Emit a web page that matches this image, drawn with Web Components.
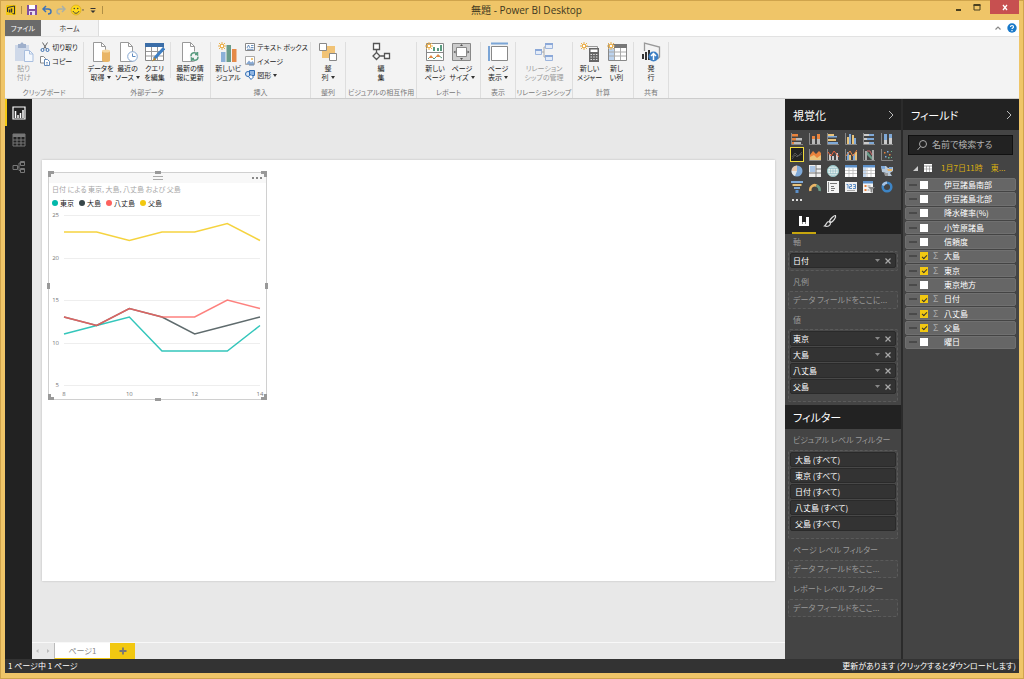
<!DOCTYPE html>
<html lang="ja">
<head>
<meta charset="utf-8">
<title>無題 - Power BI Desktop</title>
<style>
    :root{
        --gold: #efc568;
        --brand-yellow: #f2c811;
        --dark: #222;
        --panel: #444;
        --ribbon: #f3f3f3;
    }
    html, body{
        height: 100%;
        margin: 0;
    }
    body{
        font: 8px/10px "Noto Sans CJK JP", sans-serif;
        font-feature-settings: "palt";
        color: #333;
    }
</style>
</head>
<body>

<template id="ui-icon">
    <style>
        :host{ display: block; flex: none; width: 20px; height: 20px; }
        :host([size="12"]){ width: 12px; height: 12px; }
        :host([size="10"]){ width: 10px; height: 10px; }
        :host([size="14"]){ width: 14px; height: 14px; }
        svg{ display: block; width: 100%; height: 100%; }
    </style>
</template>

<template id="title-bar">
    <style>
        :host{ display: flex; height: 20px; }
        .quick{ display: flex; align-items: center; gap: 4px; }
        .sep{ width: 1px; height: 8px; background: #b08f45; }
        .controls{ display: flex; align-items: flex-start; }
        h1{ flex: 1; margin: 0; text-align: center; font: 10px/21px "Open Sans", "Noto Sans CJK JP", sans-serif; color: #40381f; }
        button{ padding: 0; border: 0; background: none; }
        .controls button{ display: flex; justify-content: center; align-items: center; width: 18px; height: 14px; }
        .controls .close{ width: 29px; background: #c75050; margin-left: 4px; }
    </style>
    <div class="quick">
        <ui-icon name="logo" size="12"></ui-icon>
        <span class="sep"></span>
        <button aria-label="保存"><ui-icon name="save" size="12"></ui-icon></button>
        <button aria-label="元に戻す"><ui-icon name="undo" size="10"></ui-icon></button>
        <button aria-label="やり直し"><ui-icon name="redo" size="10"></ui-icon></button>
        <button aria-label="フィードバック"><ui-icon name="smile" size="14"></ui-icon></button>
        <button aria-label="カスタマイズ"><ui-icon name="customize" size="10"></ui-icon></button>
        <span class="sep"></span>
    </div>
    <h1>無題 - Power BI Desktop</h1>
    <div class="controls">
        <button aria-label="最小化"><ui-icon name="min" size="10"></ui-icon></button>
        <button aria-label="最大化"><ui-icon name="max" size="10"></ui-icon></button>
        <button class="close" aria-label="閉じる"><ui-icon name="close" size="10"></ui-icon></button>
    </div>
</template>

<template id="ribbon-tabs">
    <style>
        :host{ display: flex; align-items: stretch; height: 16px; background: #fff; font-size: 7px; }
        button{ padding: 0; border: 0; font: inherit; color: #333; }
        .file{ width: 36px; background: #6a6a6a; color: #fff; }
        .home{ width: 58px; background: var(--ribbon); border-right: 1px solid #ddd; }
        .end{ display: flex; align-items: center; gap: 4px; margin-left: auto; padding-right: 2px; }
        .end button{ background: none; }
    </style>
    <button class="file">ファイル</button>
    <button class="home">ホーム</button>
    <div class="end">
        <button aria-label="リボンを折りたたむ"><ui-icon name="up" size="10"></ui-icon></button>
        <button aria-label="ヘルプ"><ui-icon name="help" size="10"></ui-icon></button>
    </div>
</template>

<template id="ribbon-group">
    <style>
        :host{
            display: flex;
            flex-direction: column;
            flex: none;
            width: var(--w, 35px);
            border-right: 1px solid #dedede;
        }
        .items{ display: flex; justify-content: center; flex: 1; gap: var(--gap, 0); white-space: nowrap; }
        .label{ text-align: center; white-space: nowrap; color: #777; line-height: 12px; }
    </style>
    <div class="items"><slot></slot></div>
    <div class="label"></div>
</template>

<template id="ribbon-button">
    <style>
        :host{ display: block; }
        button{
            display: flex;
            flex-direction: column;
            align-items: center;
            gap: 2px;
            width: var(--bw, 27px);
            padding: 0;
            border: 0;
            background: none;
            font: inherit;
            line-height: 9px;
            color: #222;
            white-space: nowrap;
        }
        :host([disabled]) button{ color: #999; }
        .menu::after{
            content: "";
            display: inline-block;
            margin-left: 2px;
            vertical-align: 1px;
            border: 2px solid transparent;
            border-top: 3px solid #333;
            border-bottom: 0;
        }
        :host([small]) button{ flex-direction: row; width: auto; height: 14px; }
        :host([small]) .text{ line-height: 14px; }
    </style>
    <button><ui-icon></ui-icon><span class="text"><slot></slot></span></button>
</template>

<template id="main-ribbon">
    <style>
        :host{
            display: flex;
            height: 63px;
            padding-top: 5px;
            background: var(--ribbon);
            border-top: 1px solid #e2e2e2;
            border-bottom: 1px solid #ccc;
            overflow: hidden;
            font-size: 7px;
        }
        .stack{ display: flex; flex-direction: column; margin-top: -2px; }
        .rule{ width: 1px; margin: 0 2px; height: 36px; background: #e0e0e0; }
    </style>
    <ribbon-group label="クリップボード" style="--w:79px; --gap:3px">
        <ribbon-button icon="paste" disabled>貼り<br>付け</ribbon-button>
        <div class="stack">
            <ribbon-button icon="cut" small>切り取り</ribbon-button>
            <ribbon-button icon="copy" small>コピー</ribbon-button>
        </div>
    </ribbon-group>
    <ribbon-group label="外部データ" style="--w:127px">
        <ribbon-button icon="data">データを<br>取得</ribbon-button>
        <ribbon-button icon="recent">最近の<br>ソース</ribbon-button>
        <ribbon-button icon="query">クエリ<br>を編集</ribbon-button>
        <span class="rule"></span>
        <ribbon-button icon="refresh" style="--bw:34px">最新の情<br>報に更新</ribbon-button>
    </ribbon-group>
    <ribbon-group label="挿入" style="--w:100px; --gap:2px">
        <ribbon-button icon="visual" style="--bw:30px">新しいビ<br>ジュアル</ribbon-button>
        <div class="stack">
            <ribbon-button icon="textbox" small>テキスト ボックス</ribbon-button>
            <ribbon-button icon="image" small>イメージ</ribbon-button>
            <ribbon-button icon="shapes" small menu>図形</ribbon-button>
        </div>
    </ribbon-group>
    <ribbon-group label="整列"><ribbon-button icon="align" menu>整<br>列</ribbon-button></ribbon-group>
    <ribbon-group label="ビジュアルの相互作用" style="--w:71px"><ribbon-button icon="interact">編<br>集</ribbon-button></ribbon-group>
    <ribbon-group label="レポート" style="--w:64px">
        <ribbon-button icon="newpage">新しい<br>ページ</ribbon-button>
        <ribbon-button icon="pagesize" menu>ページ<br>サイズ</ribbon-button>
    </ribbon-group>
    <ribbon-group label="表示"><ribbon-button icon="pageview" menu>ページ<br>表示</ribbon-button></ribbon-group>
    <ribbon-group label="リレーションシップ" style="--w:57px"><ribbon-button icon="relation" disabled style="--bw:45px">リレーション<br>シップの管理</ribbon-button></ribbon-group>
    <ribbon-group label="計算" style="--w:61px">
        <ribbon-button icon="measure">新しい<br>メジャー</ribbon-button>
        <ribbon-button icon="column">新し<br>い列</ribbon-button>
    </ribbon-group>
    <ribbon-group label="共有"><ribbon-button icon="publish">発<br>行</ribbon-button></ribbon-group>
</template>

<template id="nav-rail">
    <style>
        :host{ display: flex; flex-direction: column; flex: none; width: 27px; background: var(--dark); }
        button{
            display: flex;
            align-items: center;
            justify-content: center;
            height: 27px;
            padding: 0 2px 0 0;
            border: 0;
            border-left: 2px solid transparent;
            background: none;
            color: #777;
        }
        button[aria-pressed="true"]{ border-color: var(--brand-yellow); color: #fff; }
    </style>
    <button aria-label="レポート" aria-pressed="true"><ui-icon name="report" size="14"></ui-icon></button>
    <button aria-label="データ" aria-pressed="false"><ui-icon name="table" size="14"></ui-icon></button>
    <button aria-label="リレーションシップ" aria-pressed="false"><ui-icon name="model" size="14"></ui-icon></button>
</template>

<template id="line-chart">
    <style>
        :host{
            display: block;
            position: relative;
            border: 1px solid #d0d0d0;
            background: #fff;
        }
        .grip{ display: flex; justify-content: center; height: 10px; padding-top: 3px; background: #f8f8f8; }
        .grip i{ width: 10px; height: 4px; border: 1px solid #aaa; border-width: 1px 0; }
        .more{ position: absolute; right: 4px; top: 3px; padding: 0; border: 0; background: none; line-height: 4px; }
        h2{ margin: 0; padding: 0 3px; font-size: 7px; line-height: 12px; font-weight: 400; color: #a6a6a6; white-space: nowrap; }
        ul{ display: flex; gap: 5px; margin: 0; padding: 2px 3px 0; list-style: none; font-size: 7px; line-height: 12px; color: #222; }
        li{ display: flex; align-items: center; gap: 2px; }
        li::before{ content: ""; width: 6px; height: 6px; border-radius: 50%; background: var(--c); }
        svg{ display: block; width: 100%; overflow: visible; }
        text{ font: 6px "Open Sans", sans-serif; fill: #777; }
        /* resize handles sit over the frame */
        .h{ position: absolute; width: 6px; height: 6px; border: 0 solid #999; }
        .tl{ left: -1px; top: -2px; border-width: 3px 0 0 3px; }
        .tr{ right: -1px; top: -2px; border-width: 3px 3px 0 0; }
        .bl{ left: -1px; bottom: -1px; border-width: 0 0 3px 3px; }
        .br{ right: -1px; bottom: -1px; border-width: 0 3px 3px 0; }
        .t, .b{ left: calc(50% - 3px); height: 3px; background: #999; }
        .t{ top: -2px; }
        .b{ bottom: -2px; }
        .l, .r{ top: calc(50% - 3px); width: 3px; background: #999; }
        .l{ left: -2px; }
        .r{ right: -2px; }
    </style>
    <div class="grip"><i></i></div>
    <button class="more" aria-label="その他"><svg viewBox="0 0 10 4" style="width:10px"><path d="M0 1h2v2H0zM4 1h2v2H4zM8 1h2v2H8z" fill="#888"/></svg></button>
    <h2></h2>
    <ul></ul>
    <svg class="plot" viewBox="0 0 217 190"></svg>
    <i class="h tl"></i><i class="h t"></i><i class="h tr"></i><i class="h l"></i>
    <i class="h r"></i><i class="h bl"></i><i class="h b"></i><i class="h br"></i>
</template>

<template id="report-canvas">
    <style>
        :host{ display: flex; flex-direction: column; flex: 1; min-width: 0; background: #e8e8e8; }
        .stage{ display: flex; flex: 1; padding: 61px 10px; border-bottom: 1px solid #f8f8f8; }
        .page{ position: relative; flex: 1; background: #fff; box-shadow: 0 0 2px #bbb; }
        line-chart{ position: absolute; left: 6px; top: 12px; width: 219px; }
        .tabs{ display: flex; height: 16px; }
        button{ padding: 0; border: 0; background: none; font: inherit; color: #888; }
        .arrow{ width: 11px; color: #bbb; }
        .page-tab{ width: 56px; background: #fff; border-left: 1px solid #bbb; border-bottom: 1px solid var(--brand-yellow); }
        .add{ display: flex; align-items: center; justify-content: center; width: 25px; background: var(--brand-yellow); }
    </style>
    <div class="stage"><div class="page"><line-chart heading="日付 による 東京, 大島, 八丈島 および 父島"></line-chart></div></div>
    <div class="tabs">
        <button class="arrow" aria-label="前へ"><ui-icon name="prev" size="10"></ui-icon></button>
        <button class="arrow" aria-label="次へ"><ui-icon name="next" size="10"></ui-icon></button>
        <button class="page-tab">ページ1</button>
        <button class="add" aria-label="新しいページ"><ui-icon name="plus" size="10"></ui-icon></button>
    </div>
</template>

<template id="pane-header">
    <style>
        :host{ display: flex; align-items: center; justify-content: space-between; height: 31px; padding: 0 5px 0 8px; background: var(--dark); }
        :host([compact]){ height: 24px; }
        h2{ margin: 0; font-size: 11px; line-height: 16px; font-weight: 400; color: #fff; }
        button{ padding: 0; border: 0; background: none; }
        :host([compact]) button{ display: none; }
    </style>
    <h2><slot></slot></h2>
    <button aria-label="折りたたむ"><ui-icon name="chevron" size="10"></ui-icon></button>
</template>

<template id="field-well">
    <style>
        :host{ display: block; }
        h3{ margin: 0; padding: 0 8px; font-size: 8px; line-height: 12px; font-weight: 400; color: #999; white-space: nowrap; }
        .box{ margin: var(--head, 3px) 3px 0; padding: 1px; border: 1px dashed #5a5a5a; border-radius: 2px; background: #484848; }
        .box.filled{ padding-bottom: var(--tail, 1px); }
        .empty{ padding: 0 3px; line-height: 14px; color: #999; white-space: nowrap; }
    </style>
    <h3></h3>
    <div class="box"><slot><div class="empty"></div></slot></div>
</template>

<template id="well-item">
    <style>
        :host{
            display: flex;
            align-items: center;
            gap: 5px;
            height: 15px;
            margin-bottom: 1px;
            padding: 0 4px 0 2px;
            border: 1px solid #2a2a2a;
            border-radius: 2px;
            background: #333;
            color: #fff;
        }
        :host([filter]){ padding-left: 4px; }
        :host([filter]) button{ display: none; }
        span{ flex: 1; }
        button{ padding: 0; border: 0; background: none; }
        svg{ display: block; }
    </style>
    <span><slot></slot></span>
    <button aria-label="メニュー"><svg width="5" height="3"><path d="M0 0h5L2.500 3z" fill="#888"/></svg></button>
    <button aria-label="削除"><svg width="6" height="6"><path d="M.5 .5l5 5M5.500 .5l-5 5" stroke="#aaa" stroke-width="1.200"/></svg></button>
</template>

<template id="visual-pane">
    <style>
        :host{ display: flex; flex-direction: column; flex: none; width: 118px; border-right: 2px solid #2b2b2b; background: var(--panel); }
        .gallery{ display: grid; grid-template-columns: repeat(6, 18px); grid-auto-rows: 15px; row-gap: 1px; padding: 1px 0 0 3px; }
        .gallery button{ display: flex; align-items: center; justify-content: center; padding: 0; border: 0; background: none; }
        .gallery button[aria-pressed="true"]{ margin: 0 2px; outline: 1px solid #f2dc3c; outline-offset: -1px; background: #222; }
        .dots{ align-self: flex-start; padding: 0 7px; margin: 5px 0 5px; border: 0; background: none; }
        .dots svg{ display: block; }
        .tabs{ display: flex; height: 24px; padding-left: 7px; background: var(--dark); }
        .tabs button{ display: flex; align-items: center; justify-content: center; width: 24px; padding: 0; border: 0; border-bottom: 2px solid transparent; background: none; margin-right: 2px; }
        .tabs button:first-child{ border-color: #c7a60e; }
        .wells{ padding: 2px 0 3px; display: flex; flex-direction: column; gap: 5px; }
        .wells.filters{ --head: 4px; padding-top: 5px; }
    </style>
    <pane-header>視覚化</pane-header>
    <div class="gallery"></div>
    <button class="dots" aria-label="その他"><svg width="10" height="6"><path d="M0 0h2v2H0zM4 0h2v2H4zM8 0h2v2H8z" fill="#ddd"/></svg></button>
    <div class="tabs">
        <button aria-label="フィールド"><ui-icon name="bars" size="12"></ui-icon></button>
        <button aria-label="書式"><ui-icon name="brush" size="14"></ui-icon></button>
    </div>
    <div class="wells">
        <field-well label="軸"><well-item>日付</well-item></field-well>
        <field-well label="凡例" empty="データ フィールドをここに..."></field-well>
        <field-well label="値" style="--tail:6px">
            <well-item>東京</well-item>
            <well-item>大島</well-item>
            <well-item>八丈島</well-item>
            <well-item>父島</well-item>
        </field-well>
    </div>
    <pane-header compact>フィルター</pane-header>
    <div class="wells filters">
        <field-well label="ビジュアル レベル フィルター" style="--tail:6px">
            <well-item filter>大島 (すべて)</well-item>
            <well-item filter>東京 (すべて)</well-item>
            <well-item filter>日付 (すべて)</well-item>
            <well-item filter>八丈島 (すべて)</well-item>
            <well-item filter>父島 (すべて)</well-item>
        </field-well>
        <field-well label="ページ レベル フィルター" empty="データ フィールドをここ..."></field-well>
        <field-well label="レポート レベル フィルター" empty="データ フィールドをここ..."></field-well>
    </div>
</template>

<template id="field-row">
    <style>
        :host{ display: block; background: #666; border: 1px solid #707070; border-radius: 2px; color: #fff; }
        label{ display: flex; align-items: center; height: 100%; padding-left: 3px; }
        .drag{ width: 8px; height: 2px; background: #4a4a4a; }
        input{ appearance: none; display: flex; align-items: center; justify-content: center; width: 8px; height: 8px; margin: 0 0 0 3px; background: #fff; }
        input:checked{ background: var(--brand-yellow); }
        input:checked::before{ content: ""; width: 3px; height: 5px; border: solid #333; border-width: 0 1px 1px 0; transform: rotate(45deg); }
        .sigma{ width: 16px; padding-left: 5px; font-size: 9px; color: #aaa; }
    </style>
    <label><i class="drag"></i><input type="checkbox"><span class="sigma"></span><span><slot></slot></span></label>
</template>

<template id="fields-pane">
    <style>
        :host{ display: flex; flex-direction: column; flex: none; width: 116px; background: var(--panel); }
        .search{ display: flex; align-items: center; gap: 4px; height: 20px; margin: 5px 6px 3px 5px; padding: 0 7px; background: var(--dark); border: 1px solid #111; }
        input{ flex: 1; min-width: 0; padding: 0; border: 0; background: none; font: inherit; font-size: 9px; color: #ddd; }
        input::placeholder{ color: #b0b0b0; opacity: 1; }
        .table{ display: flex; align-items: center; gap: 5px; height: 20px; padding: 0 8px 0 10px; border: 0; background: none; font: inherit; color: #d8ae10; }
        .table span{ margin-left: 3px; white-space: pre; }
        .list{ display: grid; grid-auto-rows: 1fr; row-gap: 1px; min-height: 171px; padding: 0 3px 0 2px; }
    </style>
    <pane-header>フィールド</pane-header>
    <label class="search"><ui-icon name="search" size="12"></ui-icon><input type="text" placeholder="名前で検索する" aria-label="名前で検索する"></label>
    <button class="table"><svg width="5" height="5"><path d="M5 0v5H0z" fill="#ccc"/></svg><ui-icon name="grid" size="10"></ui-icon><span>1月7日11時　東...</span></button>
    <div class="list">
        <field-row>伊豆諸島南部</field-row>
        <field-row>伊豆諸島北部</field-row>
        <field-row>降水確率(%)</field-row>
        <field-row>小笠原諸島</field-row>
        <field-row>信頼度</field-row>
        <field-row checked>大島</field-row>
        <field-row checked>東京</field-row>
        <field-row>東京地方</field-row>
        <field-row checked>日付</field-row>
        <field-row checked>八丈島</field-row>
        <field-row checked>父島</field-row>
        <field-row>曜日</field-row>
    </div>
</template>

<template id="status-bar">
    <style>
        :host{ display: flex; justify-content: space-between; padding: 0 3px; background: #333; color: #fff; line-height: 14px; }
        a{ color: inherit; text-decoration: none; }
    </style>
    <span>1 ページ中 1 ページ</span>
    <a href="#">更新があります (クリックするとダウンロードします)</a>
</template>

<template id="desktop-app">
    <style>
        :host{
            display: flex;
            flex-direction: column;
            min-height: 100vh;
            padding: 0 5px 6px;
            background: var(--gold);
            box-shadow: inset 0 0 0 1px #cfa44c;
        }
        .work{ display: flex; flex: 1; }
    </style>
    <title-bar></title-bar>
    <ribbon-tabs></ribbon-tabs>
    <main-ribbon></main-ribbon>
    <div class="work">
        <nav-rail></nav-rail>
        <report-canvas></report-canvas>
        <visual-pane></visual-pane>
        <fields-pane></fields-pane>
    </div>
    <status-bar></status-bar>
</template>

<desktop-app></desktop-app>

<script>
    (function desktopApp(customElements){
        'use strict';

        const SUN = '<path d="M4 0v8M0 4h8M1 1l6 6M7 1l-6 6" stroke="#ecb04b"/><circle cx="4" cy="4" r="1.700" fill="#fff" stroke="#ecb04b"/>';
        const SHEET = '<path d="M2.500 .5h8l4 4v15h-12z" fill="#fff" stroke="#999"/><path d="M10.500 .5v4h4" fill="none" stroke="#999"/>';
        const AXES = '<path d="M.5 0v11.500H12" fill="none" stroke="#888"/>';

        // name: [viewBox size, markup]
        const ICONS = {
            logo: [12, '<rect x="1" y="1" width="10" height="10" rx="1" fill="#f2c811"/><path d="M2.500 3.500L9.500 2v8l-2-.5M2.500 3.500V8" fill="none" stroke="#333"/><path d="M4.500 5.500v3M6.500 4.500v4" stroke="#333" stroke-width="1.500"/>'],
            save: [12, '<path d="M1 1h10v10H1z" fill="#8150a0"/><path d="M3 1h6v4H3z" fill="#fff"/><path d="M3 7h6v4H3z" fill="#e8dcf0"/><path d="M4 8h2v3H4z" fill="#8150a0"/>'],
            undo: [10, '<path d="M4 1L1 4l3 3M1 4h5c4 0 4 5 0 5" fill="none" stroke="#3d73b9" stroke-width="1.500"/>'],
            redo: [10, '<path d="M6 1l3 3-3 3M9 4H4C0 4 0 9 4 9" fill="none" stroke="#a8b0a8" stroke-width="1.500"/>'],
            smile: [14, '<circle cx="6" cy="7" r="5" fill="#ffd91a" stroke="#c99b10" stroke-width=".5"/><circle cx="4.300" cy="5.500" r=".8" fill="#444"/><circle cx="7.700" cy="5.500" r=".8" fill="#444"/><path d="M3 8c1 3 5 3 6 0" fill="none" stroke="#444"/><path d="M12 6.500h2l-1 1.500z" fill="#444"/>'],
            customize: [10, '<path d="M2.500 3.500h5" stroke="#333"/><path d="M2.500 5.500h5L5 8z" fill="#333"/>'],
            min: [10, '<path d="M2 8h5" stroke="#4a4020" stroke-width="2"/>'],
            max: [10, '<path d="M2 3h6v5H2z" fill="none" stroke="#4a4020"/><path d="M1.500 3h7" stroke="#4a4020" stroke-width="2"/>'],
            close: [10, '<path d="M3 3l4 5M7 3L3 8" stroke="#fff" stroke-width="1.300"/>'],
            up: [10, '<path d="M2.500 6.500L5 4l2.500 2.500" fill="none" stroke="#888" stroke-width="1.200"/>'],
            help: [10, '<circle cx="5" cy="5" r="4.700" fill="#1979ca"/><path d="M3.500 4c0-2 3-2 3 0 0 1-1.500 1-1.500 2M5 7v1.200" fill="none" stroke="#fff" stroke-width="1.200"/>'],
            paste: [20, '<path d="M1 3h14v16H1z" fill="#cfd9e9"/><path d="M4 2h2.500c0-2 3-2 3 0H12v4H4z" fill="#9fb0cc"/><path d="M10.500 8.500h5l3.500 3.500v7.500h-8.500z" fill="#f4f8fd" stroke="#a9bfdf"/><path d="M15.500 8.500V12H19" fill="none" stroke="#a9bfdf"/>'],
            cut: [10, '<path d="M2.500 .5l4 6.500M7.500 .5l-4 6.500" stroke="#666"/><circle cx="2.500" cy="8" r="1.500" fill="none" stroke="#3d6fb0"/><circle cx="7.500" cy="8" r="1.500" fill="none" stroke="#3d6fb0"/>'],
            copy: [10, '<path d="M.5 .5h3l2 2V7h-5z" fill="#fff" stroke="#888"/><path d="M4.500 3.500h3l2 2v4h-5z" fill="#fff" stroke="#6288b8"/><path d="M6 6.500h2M6 8h2" stroke="#6288b8" stroke-width=".7"/>'],
            data: [20, SHEET + '<path d="M11 9v9.500c0 2 8 2 8 0V9z" fill="#e9b566"/><ellipse cx="15" cy="9" rx="4" ry="1.500" fill="#f6d79f"/>'],
            recent: [20, SHEET + '<circle cx="14.500" cy="14.500" r="4.800" fill="#fff" stroke="#86a8d2"/><path d="M14.500 11.500v3h3" fill="none" stroke="#5d8abf"/>'],
            query: [20, '<path d="M.5 1.500h18v17H.5z" fill="#fff" stroke="#888"/><path d="M0 1h19v4H0z" fill="#3b6ea8"/><path d="M1 9.500h17M1 14h17M6.500 5v13M12.500 5v13" stroke="#999"/><path d="M19 6L9 17" stroke="#3d7fc4" stroke-width="3"/><path d="M9.500 15L7 19.500l4-2z" fill="#b8862f"/>'],
            refresh: [20, SHEET + '<circle cx="14.500" cy="14.500" r="5" fill="#f3f3f3"/><path d="M11 14c0-4 5-4 6.500-1.500V10M18 15c0 4-5 4-6.500 1.500V19M17.500 12.500H15M11.500 16.500H14" fill="none" stroke="#5a9c80" stroke-width="1.500"/>'],
            visual: [20, '<path d="M3 10h4.500v10H3z" fill="#8bb0d8"/><path d="M8.500 3H13v17H8.500z" fill="#6a9c89"/><path d="M14 7h4.500v13H14z" fill="#e58a48"/>' + SUN],
            textbox: [10, '<path d="M.5 1.500h9v7h-9z" fill="#fff" stroke="#888"/><path d="M2 6l1.500-3L5 6M6 3.500h2.500M6 5.500h2.500M2 7.300h6.500" fill="none" stroke="#4a78b0" stroke-width=".8"/>'],
            image: [10, '<path d="M.5 .5h9v8h-9z" fill="#fff" stroke="#aaa"/><path d="M1 8l3-3.500 2 2 1.500-1.500L9 7v1z" fill="#86a8d2"/><circle cx="7" cy="3" r="1" fill="#ecb04b"/><path d="M4 9h5" stroke="#6288b8"/>'],
            shapes: [10, '<circle cx="3" cy="4" r="2.500" fill="#dce9f8" stroke="#2f6db5"/><path d="M4.500 .5h5v5h-5z" fill="#8db4e2" stroke="#2f6db5"/><path d="M3.500 6.500l2.500-2 2.500 2.500L6 9.500z" fill="#fff" stroke="#2f6db5"/>'],
            align: [20, '<path d="M4 4h13v12H4z" fill="#f1c376"/><path d="M1.500 1.500h7v7h-7zM11.500 11.500h7v7h-7z" fill="#fff" stroke="#888"/>'],
            interact: [20, '<path d="M2.500 1.500h6v6h-6zM13.500 11.500h5v5h-5z" fill="#fff" stroke="#555" stroke-width="1.300"/><path d="M5.500 7.500v3M9.500 14h4M5.500 10.500L9 14l-3.500 3.500L2 14z" fill="none" stroke="#555" stroke-width="1.300"/>'],
            newpage: [20, '<path d="M1.500 1.500h17v17h-17z" fill="#fff" stroke="#888"/><path d="M8 9V5h2v4zM12 9V6h2v3zM15 9V3h2v6z" fill="#5a9c80"/><path d="M2 10.500h16" stroke="#888"/><path d="M3 17l3-3 3 3 4-4 4 3" fill="none" stroke="#5a9c80"/><path d="M6 13l2.500 3h-5zM13 12l2.500 3h-5z" fill="#e58a48"/>' + SUN],
            pagesize: [20, '<path d="M.5 1.500h18v17H.5z" fill="#ccc" stroke="#888"/><path d="M4.500 5.500h10v9h-10z" fill="#fff" stroke="#888"/><path d="M8 4l1.500-2L11 4zM8 16l1.500 2 1.500-2zM3.500 8.500l-2 1.500 2 1.500zM15.500 8.500l2 1.500-2 1.500z" fill="#555"/>'],
            pageview: [20, '<path d="M3.500 4.500h16v14h-16z" fill="#fff" stroke="#888"/><path d="M3 1.500h17M1 4v15" stroke="#7ba5d6" stroke-width="2"/>'],
            relation: [20, '<path d="M4 10h6M10 5v10h2M10 5h2" fill="none" stroke="#aaa"/><path d="M1.500 7.500h6v5h-6zM11.500 1.500h7v5h-7zM11.500 13.500h7v5h-7z" fill="#e4ecf8" stroke="#9db5dd"/><path d="M1 8h7M11 2h8M11 14h8" stroke="#8ba8d8" stroke-width="2"/>'],
            measure: [20, '<path d="M5.500 4.500h12v6" fill="none" stroke="#999"/><path d="M9 6h10v14H9z" fill="#666"/><path d="M10.500 7.500h7V10h-7z" fill="#fff"/><path d="M10.500 12.500h7M10.500 15h7M10.500 17.500h7" stroke="#ddd" stroke-dasharray="1.500 1.200"/>' + SUN],
            column: [20, '<path d="M1.500 2.500h18v16h-18z" fill="#fff" stroke="#888"/><path d="M7 2h13v4H7z" fill="#777"/><path d="M2 6h5v12H2z" fill="#bcd3ee"/><path d="M2 10h17M2 14h17M7.500 6v12M13.500 6v12" stroke="#aaa"/>' + SUN],
            publish: [20, '<path d="M3.500 9V1l15 4v10l-2 2" fill="none" stroke="#999" stroke-width="1.300"/><path d="M2 12v5M5 10v8M8 8v10" stroke="#333" stroke-width="2"/><circle cx="12.500" cy="14.500" r="5" fill="#3d7fc4"/><path d="M12.500 18v-6M10 14l2.500-2.500L15 14" fill="none" stroke="#fff" stroke-width="1.500"/>'],
            report: [14, '<path d="M1 1h12v12H1z" fill="none" stroke="currentColor" stroke-width="1.200"/><path d="M3.500 5v7M6 9v3M8.500 7v5M11 4v8" stroke="currentColor" stroke-width="1.500"/>'],
            table: [14, '<path d="M1 1h12v3H1z" fill="currentColor"/><path d="M1 1h12v12H1zM1 7h12M1 10h12M5 4v9M9 4v9" fill="none" stroke="currentColor"/>'],
            model: [14, '<path d="M1 5.500h4.500v4H1zM8.500 1.500h4v4h-4zM8.500 8.500h4v4h-4zM5.500 7h1.500M8.500 3H7v7.500h1.500M8.500 2.500h4M8.500 9.500h4" fill="none" stroke="currentColor"/>'],
            prev: [10, '<path d="M6.500 3v4L4 5z" fill="#bbb"/>'],
            next: [10, '<path d="M4 3v4l2.500-2z" fill="#bbb"/>'],
            plus: [10, '<path d="M5 1.500v7M1.500 5h7" stroke="#777" stroke-width="1.800"/>'],
            chevron: [10, '<path d="M3 1l4 4-4 4" fill="none" stroke="#bbb"/>'],
            search: [12, '<circle cx="7" cy="5" r="3.500" fill="none" stroke="#aaa"/><path d="M4.500 7.500L1.500 11" stroke="#aaa"/>'],
            grid: [10, '<path d="M1 1h8v8H1z" fill="#fff"/><path d="M1 3h8" stroke="#999"/><path d="M3.500 3v6M6.500 3v6M1 6h8" stroke="#888" stroke-width=".6"/>'],
            bars: [12, '<path d="M1 1h3v10H1zM4.500 7h3v4h-3zM8 2h3v9H8z" fill="#fff"/><path d="M4 9h4v2H4z" fill="#fff"/>'],
            brush: [14, '<path d="M12.500 1.500c-2 0-5 3.500-6 5.500l1.500 1.500c2-1 5.500-5 4.500-7zM6 7.500c-3 0-2 3-4.500 4.500 3 1 6 0 6-3z" fill="none" stroke="#ddd" stroke-width="1.200"/>'],
            hstack: [12, AXES + '<path d="M1 1h6v2.500H1zM1 5h4v2.500H1zM1 9h2v2H1z" fill="#e8823c"/><path d="M5 5h6v2.500H5zM3 9h7v2H3z" fill="#bbb"/>'],
            vstack: [12, AXES + '<path d="M3 3h3v3H3zM8 1h3v5H8z" fill="#e8823c"/><path d="M3 6h3v5H3zM8 6h3v5H8z" fill="#bbb"/>'],
            hbar: [12, AXES + '<path d="M1 1h6v2H1zM1 6h8v2H1z" fill="#e9c37a"/><path d="M1 3h9v1.500H1zM1 9h10v2H1z" fill="#7fa9d8"/>'],
            vbar: [12, AXES + '<path d="M2 4h2v7H2zM7 2h2v9H7z" fill="#e9c37a"/><path d="M4 1h2v10H4zM9 5h2v6H9z" fill="#7fa9d8"/>'],
            hfull: [12, AXES + '<path d="M1 1h5v2H1zM1 5h3v2H1zM1 9h5v2H1z" fill="#ccc"/><path d="M6 1h5v2H6zM4 5h7v2H4zM6 9h5v2H6z" fill="#7fa9d8"/>'],
            vfull: [12, AXES + '<path d="M3 1h3v6H3zM8 1h3v4H8z" fill="#7fa9d8"/><path d="M3 7h3v4H3zM8 5h3v6H8z" fill="#ccc"/>'],
            line: [12, '<path d="M1 10l3-4 2 2 5-5M1 8l3-4 3 3 4-2" fill="none" stroke="#555"/>'],
            area: [12, AXES + '<path d="M1 11V6l3-4 3 3 3-3 2 2v7z" fill="#e8823c"/><path d="M1 11V8l4-2 3 3 4-3v5z" fill="#e9c37a"/>'],
            combo: [12, AXES + '<path d="M2 5h2v6H2zM5 7h2v4H5zM9 4h2v7H9z" fill="#ccc"/><path d="M1 3l3 4 3-5 5 6" fill="none" stroke="#e8623c"/>'],
            combo2: [12, AXES + '<path d="M2 3h2v8H2zM8 5h2v6H8z" fill="#7fa9d8"/><path d="M4 6h2v5H4zM10 3h2v8h-2z" fill="#e9c37a"/><path d="M1 7l4-5 3 5 4-6" fill="none" stroke="#e8823c"/>'],
            ribbon: [12, AXES + '<path d="M2 2h2v9H2zM9 1h2v10H9z" fill="#aaa"/><path d="M4 2l5 6v3L4 6z" fill="#6a9c89"/><path d="M4 2h3l2 4" fill="none" stroke="#c96a6a"/>'],
            scatter: [12, AXES + '<path d="M3 3h1.500v1.500H3zM8 5h1.500v1.500H8z" fill="#e8823c"/><path d="M6 2h1.500v1.500H6zM4 7h1.500v1.500H4z" fill="#7fa9d8"/><path d="M10 2h1v1h-1zM7 8h1.500v1.500H7zM10 8h1v1h-1z" fill="#6ab08e"/>'],
            pie: [12, '<circle cx="6" cy="6" r="5.500" fill="#7fa9d8"/><path d="M6 6V.5A5.500 5.500 0 0 0 .5 6z" fill="#e8c9b0"/><path d="M6 6L.5 6A5.500 5.500 0 0 0 4 11z" fill="#e8e8e8"/>'],
            tree: [12, '<path d="M0 0h12v12H0z" fill="#eee"/><path d="M1 1h5v6H1z" fill="#a9c4e4"/><path d="M7 0v12M0 8h12M7 4h5" stroke="#777"/>'],
            globe: [12, '<circle cx="6" cy="6" r="5.500" fill="#e8f2ef" stroke="#9cc"/><path d="M.5 6h11M6 .5v11M1.500 3.500h9M1.500 8.500h9" stroke="#8ab5c0" stroke-width=".6"/><ellipse cx="6" cy="6" rx="2.500" ry="5.500" fill="none" stroke="#8ab5c0" stroke-width=".6"/>'],
            tbl: [12, '<path d="M0 0h12v12H0z" fill="#fff"/><path d="M0 0h12v2.500H0z" fill="#5b8fc9"/><path d="M0 5.500h12M0 8.500h12M4 3v9M8 3v9" stroke="#bbb" stroke-width=".8"/>'],
            matrix: [12, '<path d="M0 0h12v12H0z" fill="#fff"/><path d="M0 0h12v2.500H0z" fill="#5b8fc9"/><path d="M0 3h3v9H0z" fill="#c4d8ee"/><path d="M0 5.500h12M0 8.500h12M4 3v9M8 3v9" stroke="#bbb" stroke-width=".8"/>'],
            map: [12, '<path d="M0 1h5l2 2 5-1v4l-3 2 2 3H7L5 8 1 7z" fill="#b8c8d8"/><path d="M0 1h4v3H1zM8 2h3v2H8z" fill="#7fa9d8"/><path d="M6 4h5v2H7z" fill="#e9b566"/><path d="M3 8h4v3H4z" fill="#999"/>'],
            funnel: [12, '<path d="M0 0h12v2H0z" fill="#7fa9d8"/><path d="M1.500 3h9v2h-9z" fill="#e9c37a"/><path d="M3 6h6v2H3z" fill="#7fa9d8"/><path d="M4.500 9h3v3h-3z" fill="#5b8fc9"/>'],
            gauge: [12, '<path d="M1.500 10a4.500 4.500 0 0 1 6-5.500" fill="none" stroke="#e9b566" stroke-width="2.500"/><path d="M7.500 4.500a5 5 0 0 1 3 5.500" fill="none" stroke="#6a9c89" stroke-width="2.500"/>'],
            card: [12, '<path d="M0 0h12v12H0z" fill="#f4f4f4"/><path d="M3 2.500h7M4 5.500h3M4 7.500h4M4 9.500h3" stroke="#777"/><path d="M1.500 1v10" stroke="#888"/>'],
            num: [12, '<path d="M0 1h12v10H0z" fill="#eee"/><path d="M1.500 3.500h1.500v4M4.500 3.500h2v2h-2v2h2.500M8 3.500h2.500v4H8M8.500 5.500h2" fill="none" stroke="#4a80c0" stroke-width=".9"/><path d="M2 9.500h8" stroke="#aaa"/>'],
            slicer: [12, '<path d="M0 0h10v12H0z" fill="#f4f4f4"/><path d="M0 0h10v2.500H0z" fill="#5b8fc9"/><path d="M1.500 4h2v2h-2zM1.500 8h2v2h-2z" fill="#e8823c"/><path d="M4.500 5h3M4.500 9h2" stroke="#999"/><path d="M5 6h7L9.500 8.500V12l-2-1V8.500z" fill="#888"/>'],
            donut: [12, '<circle cx="6" cy="6" r="4.300" fill="none" stroke="#3d85c6" stroke-width="2.500"/><path d="M2 4.500A4.300 4.300 0 0 1 6 1.700" fill="none" stroke="#a9c4e4" stroke-width="2.500"/>']
        };

        // every element clones the template that carries its own tag name
        class AppElement extends HTMLElement {
            constructor(){
                super();
                const shadowRoot = this.attachShadow({mode: 'open'});
                const base = document.createElement('style');
                base.textContent = ':host, *, ::before, ::after{ box-sizing: border-box; }';
                shadowRoot.appendChild(base);
                shadowRoot.appendChild(document.importNode(document.getElementById(this.localName).content, true));
            }

            $(selector){
                return this.shadowRoot.querySelector(selector);
            }
        }

        class UiIcon extends AppElement {
            static get observedAttributes(){
                return ['name'];
            }

            attributeChangedCallback(attr, oldVal, newVal){
                const icon = ICONS[newVal];
                if(!icon){
                    return;
                }
                const holder = document.createElement('template');
                holder.innerHTML = `<svg viewBox="0 0 ${icon[0]} ${icon[0]}" aria-hidden="true">${icon[1]}</svg>`;
                const old = this.$('svg');
                if(old){
                    old.remove();
                }
                this.shadowRoot.appendChild(holder.content);
            }
        }

        class RibbonGroup extends AppElement {
            connectedCallback(){
                this.$('.label').textContent = this.getAttribute('label');
            }
        }

        class RibbonButton extends AppElement {
            connectedCallback(){
                const icon = this.$('ui-icon');
                if(this.hasAttribute('small')){
                    icon.setAttribute('size', '10');
                }
                icon.setAttribute('name', this.getAttribute('icon'));
                this.$('button').disabled = this.hasAttribute('disabled');
                this.$('.text').classList.toggle('menu', this.hasAttribute('menu') || ['data', 'recent'].includes(this.getAttribute('icon')));
            }
        }

        class LineChart extends AppElement {
            connectedCallback(){
                this.series = [
                    {name: '東京', color: '#01b8aa', values: [11, 12, 13, 9, 9, 9, 12]},
                    {name: '大島', color: '#374649', values: [13, 12, 14, 13, 11, 12, 13]},
                    {name: '八丈島', color: '#fd625e', values: [13, 12, 14, 13, 13, 15, 14]},
                    {name: '父島', color: '#f2c80f', values: [23, 23, 22, 23, 23, 24, 22]}
                ];
                this.$('h2').textContent = this.getAttribute('heading');
                this.$('ul').innerHTML = this.series.map(s => `<li style="--c:${s.color}">${s.name}</li>`).join('');
                this.$('.plot').innerHTML = this.drawGrid() + this.drawLines();
            }

            x(day){
                return 15 + (day - 8) * 196 / 6;
            }

            y(value){
                return 6 + (25 - value) * 8.5;
            }

            drawGrid(){
                const rows = [25, 20, 15, 10, 5].map(v =>
                    `<path d="M15 ${Math.round(this.y(v)) + .5}h196" stroke="#eee"/><text x="10" y="${this.y(v) + 2}" text-anchor="end">${v}</text>`);
                const cols = [8, 10, 12, 14].map(d =>
                    `<text x="${this.x(d)}" y="187" text-anchor="middle">${d}</text>`);
                return rows.concat(cols).join('');
            }

            drawLines(){
                return this.series.map(s => {
                    const points = s.values.map((v, i) => `${this.x(8 + i)},${this.y(v)}`).join(' ');
                    return `<polyline points="${points}" fill="none" stroke="${s.color}" stroke-width="1.500" opacity=".8"/>`;
                }).join('');
            }
        }

        class FieldWell extends AppElement {
            connectedCallback(){
                this.$('h3').textContent = this.getAttribute('label');
                this.$('.empty').textContent = this.getAttribute('empty') || '';
                this.$('.box').classList.toggle('filled', !this.hasAttribute('empty'));
            }
        }

        class VisualPane extends AppElement {
            connectedCallback(){
                const names = ['hstack', 'vstack', 'hbar', 'vbar', 'hfull', 'vfull',
                    'line', 'area', 'combo', 'combo2', 'ribbon', 'scatter',
                    'pie', 'tree', 'globe', 'tbl', 'matrix', 'map',
                    'funnel', 'gauge', 'card', 'num', 'slicer', 'donut'];
                this.$('.gallery').innerHTML = names.map(n =>
                    `<button aria-label="${n}" aria-pressed="${n == 'line'}"><ui-icon name="${n}" size="12"></ui-icon></button>`).join('');
            }
        }

        class FieldRow extends AppElement {
            connectedCallback(){
                const checked = this.hasAttribute('checked');
                this.$('input').checked = checked;
                this.$('.sigma').textContent = checked ? 'Σ' : '';
            }
        }

        customElements.define('ui-icon', UiIcon);
        customElements.define('ribbon-group', RibbonGroup);
        customElements.define('ribbon-button', RibbonButton);
        customElements.define('line-chart', LineChart);
        customElements.define('field-well', FieldWell);
        customElements.define('field-row', FieldRow);
        customElements.define('visual-pane', VisualPane);
        ['title-bar', 'ribbon-tabs', 'main-ribbon', 'nav-rail', 'report-canvas', 'pane-header',
            'well-item', 'fields-pane', 'status-bar', 'desktop-app'].forEach(name => {
            customElements.define(name, class extends AppElement {});
        });
    })(window.customElements);
</script>
</body>
</html>
